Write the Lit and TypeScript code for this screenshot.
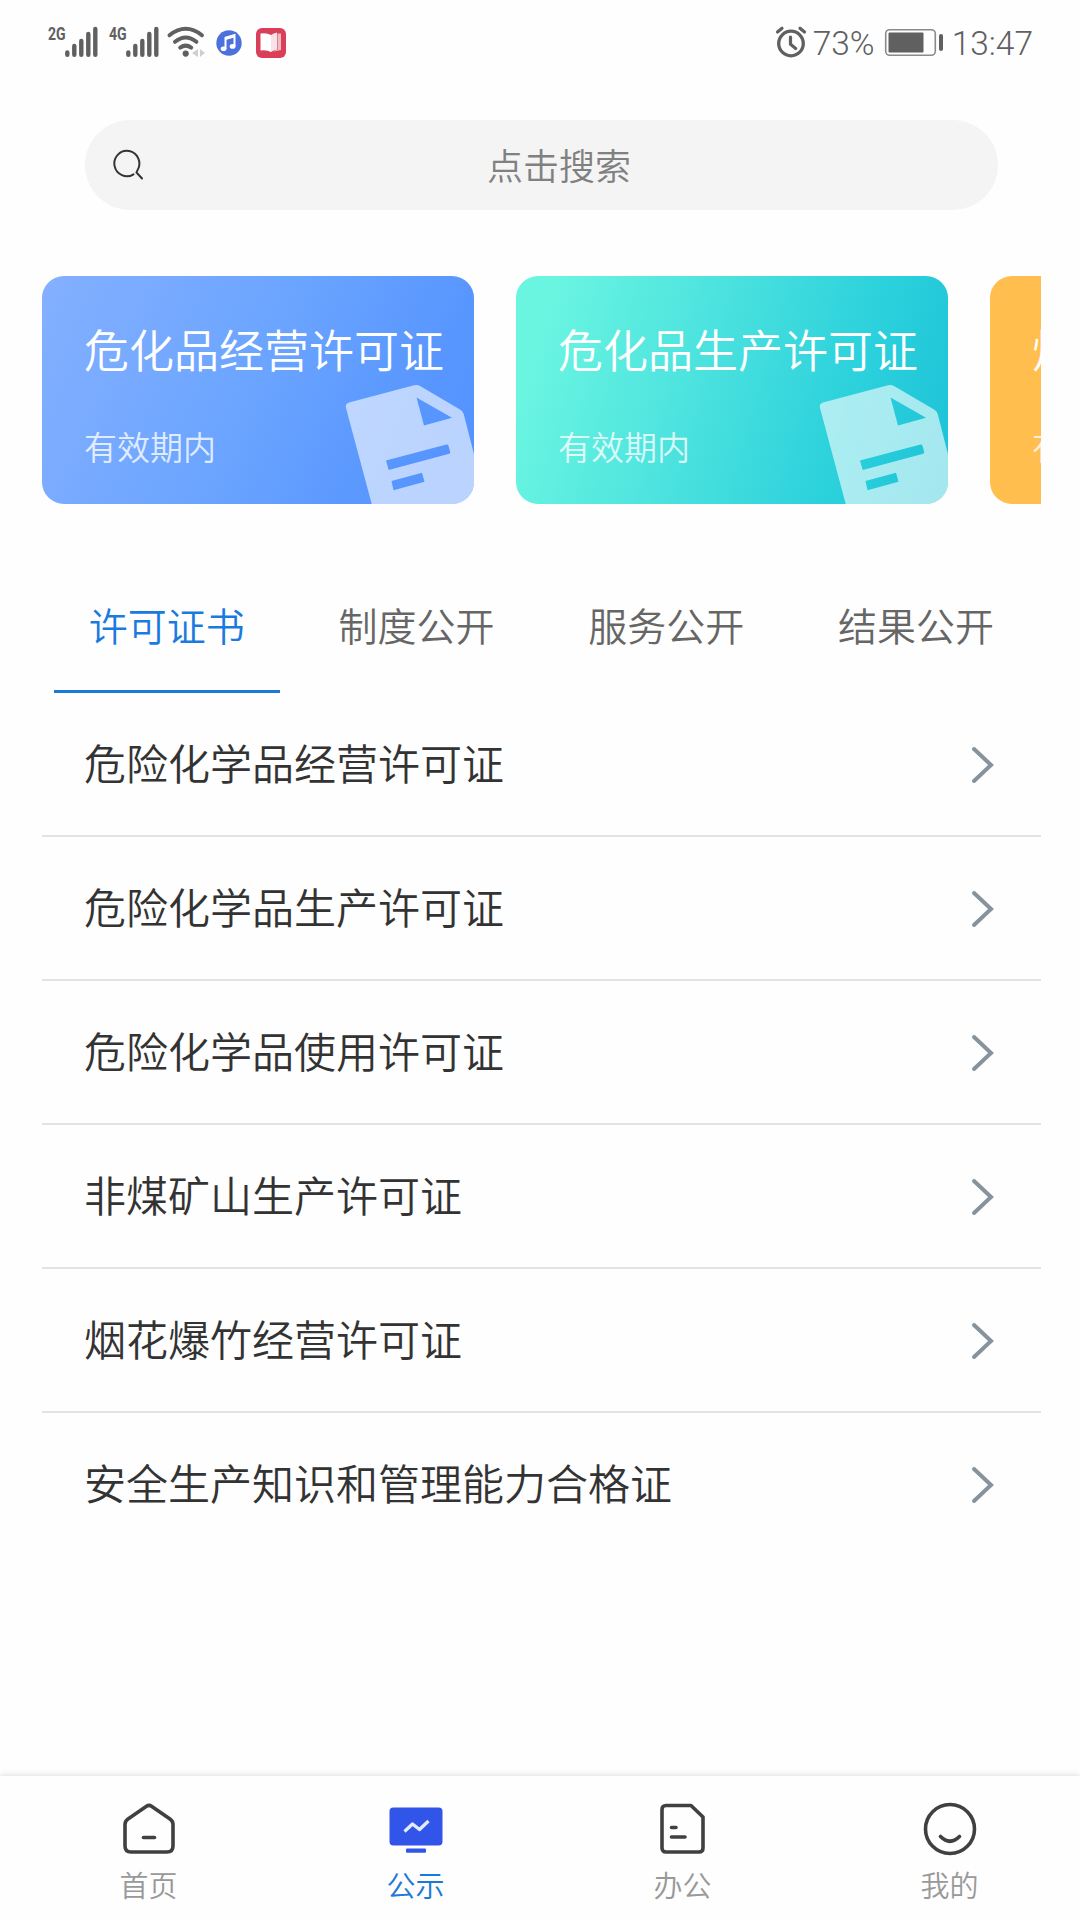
import { LitElement, html, svg, css } from "lit";
import { customElement, property, state } from "lit/decorators.js";
import { classMap } from "lit/directives/class-map.js";

@customElement("status-bar")
class StatusBar extends LitElement {
  static styles = css`
    :host { display: block; color: #606060; font-family: Roboto, sans-serif; }
    .bar { height: 84px; display: flex; justify-content: space-between; align-items: flex-start; padding: 0 47px 0 48px; }
    .group { display: flex; height: 84px; }
    svg { display: block; flex: none; }
    .net { width: 17px; font-size: 19px; line-height: 20px; font-weight: 700; padding-top: 24px; white-space: nowrap; }
    .net span { display: inline-block; transform: scaleX(0.74); transform-origin: 0 0; }
    .second { margin-left: 10px; }
    .num { font-size: 33.5px; line-height: 40px; padding-top: 24px; font-weight: 350; white-space: nowrap; }
    .battery { margin: 0 8px 0 9px; }
  `;

  private bars() {
    const tops = [52.5, 46, 41, 34, 29];
    return html`<svg width="34" height="84" viewBox="0 0 34 84" stroke="#606060" stroke-width="4.4" stroke-linecap="round">
      ${tops.map((t, i) => svg`<line x1=${2.3 + i * 7} x2=${2.3 + i * 7} y1=${t} y2="54.8"></line>`)}
    </svg>`;
  }

  render() {
    return html`<div class="bar">
      <div class="group">
        <div class="net"><span>2G</span></div>${this.bars()}
        <div class="net second"><span>4G</span></div>${this.bars()}
        <svg width="130" height="84" viewBox="160 0 130 84" fill="none">
          <g stroke="#606060" stroke-width="4" stroke-linecap="round">
            <path d="M169.5 35.2Q185.7 22.3 201.9 35.2"></path>
            <path d="M175 41.8Q185.7 33.2 196.4 41.8"></path>
            <path d="M180.2 47.6Q185.7 43.6 191.2 47.6"></path>
          </g>
          <circle cx="185.7" cy="53.6" r="3.1" fill="#606060"></circle>
          <path d="M198 49v8l-6-4zM200 49v8l5-4z" fill="#cfcfcf"></path>
          <circle cx="229" cy="43" r="12.7" fill="#4c70dc"></circle>
          <path d="M225.5 48.5V37.8l9-2.6v11" stroke="#fff" stroke-width="2"></path>
          <path d="M225.5 37l9-2.6v3l-9 2.6z" fill="#fff"></path>
          <ellipse cx="223.6" cy="48.8" rx="2.9" ry="2.3" fill="#fff"></ellipse>
          <ellipse cx="232.6" cy="46.4" rx="2.9" ry="2.3" fill="#fff"></ellipse>
          <rect x="256" y="28" width="30" height="30" rx="6" fill="#d93f58"></rect>
          <path d="M260.500 33.500q6.500-1 10.500 1.500v17q-4.500-2.500-10.500-1.500z" fill="#fff"></path>
          <path d="M271 35q2.500-2 6-2.500v17q-3.500.5-6 2.500z" fill="#f8e3e6"></path>
          <path d="M277.500 33.500h3.500v16.500l-8 1.500q2-1.500 4.500-2z" fill="#f0bcc5"></path>
        </svg>
      </div>
      <div class="group">
        <svg width="38" height="84" viewBox="773 0 38 84" fill="none" stroke="#606060">
          <circle cx="789" cy="43.500" r="12.300" stroke-width="3.300"></circle>
          <path d="M788.500 37v7.300l5.200 4.200" stroke-width="3.200" stroke-linecap="round" stroke-linejoin="round"></path>
          <path d="M775.500 32l4.500-3.800M802.500 32l-4.500-3.800" stroke-width="3.200" stroke-linecap="round"></path>
        </svg>
        <div class="num">73%</div>
        <svg class="battery" width="60" height="84" viewBox="881 0 60 84" fill="none">
          <rect x="882.700" y="29.700" width="49.600" height="25.600" rx="4" stroke="#8a8a8a" stroke-width="1.600"></rect>
          <rect x="885.500" y="32.500" width="35" height="20" rx="1" fill="#606060"></rect>
          <rect x="936" y="34" width="4" height="17" rx="2" fill="#606060"></rect>
        </svg>
        <div class="num">13:47</div>
      </div>
    </div>`;
  }
}

@customElement("permit-card")
class PermitCard extends LitElement {
  @property() name = "";
  @property() tone = "blue";

  static styles = css`
    :host { display: block; flex: none; }
    .card { position: relative; box-sizing: border-box; width: 432px; height: 228px; border-radius: 22px; overflow: hidden; padding: 43px 0 0 42px; color: #fff; white-space: nowrap; }
    .blue { background: linear-gradient(114deg, #84b0ff 0%, #6aa4ff 50%, #5896ff 82%, #5392ff 100%); }
    .teal { background: linear-gradient(106deg, #6af5e1 8%, #46dfde 48%, #2bd1dc 75%, #1cc2d6 100%); }
    .amber { background: #ffbe4d; }
    .name { font-size: 45px; line-height: 60px; }
    .state { margin-top: 46px; font-size: 33px; line-height: 42px; opacity: 0.78; }
    .doc { position: absolute; right: 0; bottom: 0; display: block; }
  `;

  render() {
    return html`<div class="card ${this.tone}">
      <svg class="doc" width="132" height="122" viewBox="342 381 132 122">
        <path fill="#fff" fill-opacity="0.6" fill-rule="evenodd" d="M349 401.500L414 384.300q3.500-.9 6.500.9L460 408.500q3 1.500 3.700 4.500L487 504H372L346 407q-1-4 3-5.500zM416.500 396.500L424 424.500L452 416.800zM386 459.500l60.500-16q1.500 0 2 1.200l1.700 6.300q0 1.500-1 1.700l-60.500 16.300zM391.500 480l30.500-8.300 2.500 9-31 8.500z"></path>
      </svg>
      <div class="name">${this.name}</div>
      <div class="state">有效期内</div>
    </div>`;
  }
}

const house = svg`<g fill="none" stroke="#404040" stroke-width="3.600" stroke-linecap="round" stroke-linejoin="round">
  <path d="M27.500 6.200q2.500-1.700 5 0l18.500 12.800q3 2 3 5.500V46q0 6-6 6h-36q-6 0-6-6V24.500q0-3.500 3-5.500z"></path><path d="M24.500 37.500h11"></path></g>`;
const monitor = svg`<rect x="3.500" y="7.500" width="53" height="38" rx="4" fill="#3055e8"></rect>
  <rect x="20" y="48.500" width="20" height="4.200" rx="1" fill="#3055e8"></rect>
  <path d="M18.500 31.500l8-7.500 7 5.500 9-8.500" fill="none" stroke="#e4ebff" stroke-width="3.300" stroke-linejoin="round"></path>`;
const paper = svg`<g fill="none" stroke="#404040" stroke-width="3.600" stroke-linecap="round" stroke-linejoin="round">
  <path d="M13 5.500h25L50 17V48q0 4-4 4H13q-4 0-4-4V9.500q0-4 4-4z"></path><path d="M18.500 27.500h4.500M18.500 37h13.500"></path></g>`;
const smile = svg`<g fill="none" stroke="#404040" stroke-width="3.600" stroke-linecap="round">
  <circle cx="30" cy="29" r="24.500"></circle><path d="M20.500 36.500q9.500 9.500 19 0"></path></g>`;

@customElement("app-root")
class AppRoot extends LitElement {
  @state() private tab = 0;
  @state() private page = 1;

  private tabs = ["许可证书", "制度公开", "服务公开", "结果公开"];
  private cards = [
    { name: "危化品经营许可证", tone: "blue" },
    { name: "危化品生产许可证", tone: "teal" },
    { name: "烟花爆竹经营许可证", tone: "amber" },
  ];
  private rows = [
    "危险化学品经营许可证",
    "危险化学品生产许可证",
    "危险化学品使用许可证",
    "非煤矿山生产许可证",
    "烟花爆竹经营许可证",
    "安全生产知识和管理能力合格证",
  ];
  private nav = [
    { label: "首页", icon: house },
    { label: "公示", icon: monitor },
    { label: "办公", icon: paper },
    { label: "我的", icon: smile },
  ];

  static styles = css`
    :host { display: block; font-family: "Noto Sans CJK SC", sans-serif; font-weight: 350; }
    .screen { width: 1080px; height: 1920px; box-sizing: border-box; background: #fefefe; display: flex; flex-direction: column; overflow: hidden; }
    .search { margin: 36px 82px 0 85px; height: 90px; flex: none; border-radius: 45px; background: #f4f4f4; display: flex; align-items: center; color: #808080; font-size: 36px; line-height: 50px; }
    .search svg { margin-left: 28px; flex: none; }
    .search span { flex: 1; text-align: center; padding: 0 27px 2px 0; }
    .cards { margin: 66px 39px 0 42px; height: 228px; flex: none; display: flex; gap: 42px; overflow: hidden; }
    .tabs { margin: 60px 39px 0 42px; height: 129px; flex: none; display: grid; grid-template-columns: repeat(4, 1fr); }
    .tab { margin: 0 12px; box-sizing: border-box; border-bottom: 3px solid transparent; padding-top: 32px; text-align: center; font-size: 39px; line-height: 56px; color: #666; cursor: pointer; }
    .tab.on { color: #1b7ae0; border-bottom-color: #1b7ad6; }
    .list { margin: 0 39px 0 42px; flex: 1; }
    .row { box-sizing: border-box; height: 144px; border-bottom: 2px solid #e3e3e3; display: flex; align-items: center; justify-content: space-between; padding: 0 47px 5px 42px; font-size: 42px; line-height: 60px; color: #333; }
    .row:last-child { border-bottom-color: transparent; }
    .row svg { display: block; margin-top: 7px; }
    .nav { height: 144px; flex: none; padding-left: 15px; display: grid; grid-template-columns: repeat(4, 267px); box-shadow: 0 -1px 6px rgba(0, 0, 0, 0.13); background: #fefefe; }
    .item { display: flex; flex-direction: column; align-items: center; padding-top: 24px; font-size: 29px; line-height: 40px; color: #999; cursor: pointer; }
    .item svg { display: block; margin-bottom: 4px; }
    .item.on { color: #1b7ad6; }
  `;

  render() {
    return html`<div class="screen">
      <status-bar></status-bar>
      <div class="search">
        <svg width="34" height="34" viewBox="0 0 34 34" fill="none" stroke="#333" stroke-width="2" stroke-linecap="round">
          <path d="M20.500 26.300A12.500 12.700 0 1 1 24.500 22.200L23.500 24.500l5.500 6"></path>
        </svg>
        <span>点击搜索</span>
      </div>
      <div class="cards">
        ${this.cards.map((c) => html`<permit-card .name=${c.name} .tone=${c.tone}></permit-card>`)}
      </div>
      <div class="tabs">
        ${this.tabs.map((t, i) => html`<div class=${classMap({ tab: true, on: i === this.tab })} @click=${() => (this.tab = i)}>${t}</div>`)}
      </div>
      <div class="list">
        ${this.rows.map((r) => html`<div class="row"><span>${r}</span>
          <svg width="24" height="40" viewBox="0 0 24 40" fill="none" stroke="#87939c" stroke-width="4" stroke-linecap="round" stroke-linejoin="miter"><path d="M4 4l17 16-17 16"></path></svg>
        </div>`)}
      </div>
      <div class="nav">
        ${this.nav.map((n, i) => html`<div class=${classMap({ item: true, on: i === this.page })} @click=${() => (this.page = i)}>
          <svg width="60" height="60" viewBox="0 0 60 60">${n.icon}</svg>
          <span>${n.label}</span>
        </div>`)}
      </div>
    </div>`;
  }
}
